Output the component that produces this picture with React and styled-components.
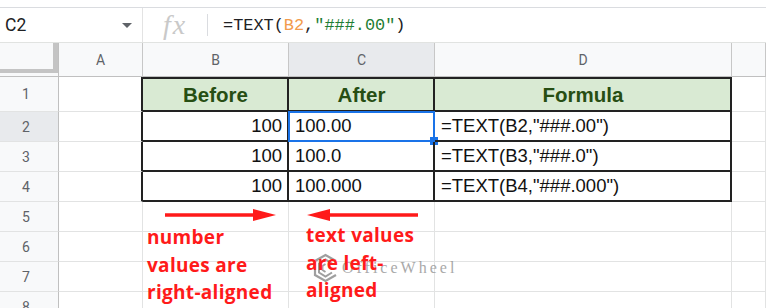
import React from 'react';
import styled, { createGlobalStyle, css } from 'styled-components';

const Global = createGlobalStyle`
  html, body { margin: 0; padding: 0; background: #fff; }
  body { width: 766px; height: 308px; overflow: hidden; font-family: "Liberation Sans", Arial, sans-serif; }
  * { box-sizing: border-box; }
`;

const Page = styled.div`
  position: relative;
  width: 766px;
  height: 308px;
  overflow: hidden;
  background: #fff;
  display: flex;
  flex-direction: column;
`;

const TopStrip = styled.div`
  flex: none;
  height: 8px;
  border-bottom: 1px solid #dadce0;
`;

const FormulaBar = styled.div`
  flex: none;
  height: 35px;
  display: flex;
  align-items: center;
  border-bottom: 1px solid #e1e3e1;
`;

const NameBox = styled.div`
  width: 143px;
  height: 100%;
  display: flex;
  align-items: center;
  justify-content: space-between;
  padding: 0 10px 0 5px;
  border-right: 1px solid #e3e3e3;
  font-family: Roboto, "Liberation Sans", sans-serif;
  font-size: 17.5px;
  color: #202124;
`;

const Caret = styled.span`
  width: 0;
  height: 0;
  border-left: 5px solid transparent;
  border-right: 5px solid transparent;
  border-top: 5px solid #5f6368;
`;

const Fx = styled.div`
  width: 44px;
  margin-left: 20px;
  font-family: "Liberation Serif", serif;
  font-style: italic;
  font-size: 28px;
  letter-spacing: 2px;
  color: #c9c9c9;
  line-height: 1;
`;

const BarDivider = styled.div`
  width: 1px;
  height: 22px;
  background: #dadce0;
`;

const FormulaText = styled.div`
  margin-left: 15px;
  font-family: "Liberation Mono", "DejaVu Sans Mono", monospace;
  font-size: 16.9px;
  color: #202124;
  white-space: pre;
`;

const Ref = styled.span`
  color: #f29b4c;
`;

const Str = styled.span`
  color: #1e7e34;
`;

const Grid = styled.div`
  flex: 1;
  display: grid;
  grid-template-columns: 59px 84px 146px 146px 297px 1fr;
  grid-template-rows: 34px 35px repeat(7, 30px);
`;

const Corner = styled.div`
  background: #f8f9fa;
  border-right: 1px solid #c0c0c0;
  border-bottom: 1px solid #c0c0c0;
`;

const FrozenHandle = styled.div`
  width: 100%;
  height: 30px;
  border-right: 5px solid #c4c4c4;
  border-bottom: 4px solid #c4c4c4;
`;

const ColHeader = styled.div`
  display: flex;
  align-items: center;
  justify-content: center;
  background: ${(p) => (p.$active ? '#e8eaed' : '#f8f9fa')};
  border-right: 1px solid #c7c7c7;
  border-bottom: 1px solid #c0c0c0;
  font-family: Roboto, "Liberation Sans", sans-serif;
  font-size: 14px;
  color: #5f6368;
`;

const RowHeader = styled.div`
  display: flex;
  align-items: center;
  justify-content: center;
  padding-right: 6px;
  background: ${(p) => (p.$active ? '#e8eaed' : '#f8f9fa')};
  border-right: 1px solid #c0c0c0;
  border-bottom: 1px solid #e2e3e3;
  font-family: Roboto, "Liberation Sans", sans-serif;
  font-size: 14px;
  color: #5f6368;
`;

const Cell = styled.div`
  position: relative;
  display: flex;
  align-items: center;
  padding: 0 5px;
  border-right: ${(p) => (p.$edge ? '2px solid #222' : '1px solid #e2e3e3')};
  border-bottom: 1px solid #e2e3e3;
`;

const TableCell = styled.div`
  position: relative;
  display: flex;
  align-items: center;
  justify-content: ${(p) => (p.$align === 'right' ? 'flex-end' : p.$align === 'center' ? 'center' : 'flex-start')};
  padding: 0 5px 0 6px;
  border-right: 2px solid #222;
  border-bottom: 2px solid #222;
  font-family: "Liberation Sans", Arial, sans-serif;
  font-size: 18.5px;
  color: #111;
  white-space: nowrap;
  ${(p) =>
    p.$head &&
    css`
      border-top: 2px solid #222;
      background: #d9ead3;
      font-weight: bold;
      font-size: 20.5px;
      color: #274e13;
    `}
`;

const Selection = styled.div`
  position: absolute;
  top: -1px;
  left: -1px;
  right: -2px;
  bottom: -2px;
  border: 2px solid #1a73e8;
  pointer-events: none;
`;

const FillHandle = styled.div`
  position: absolute;
  right: -5px;
  bottom: -5px;
  width: 8px;
  height: 8px;
  background: #1a73e8;
`;

const ArrowSvg = styled.svg`
  position: absolute;
  top: 206px;
  left: ${(p) => p.$left}px;
`;

const Note = styled.div`
  position: absolute;
  left: ${(p) => p.$left}px;
  top: ${(p) => p.$top}px;
  font-family: "Open Sans", sans-serif;
  font-weight: 700;
  font-size: 19px;
  letter-spacing: 0.3px;
  line-height: 27.5px;
  color: #ff1a1a;
  white-space: nowrap;
`;

const Watermark = styled.div`
  position: absolute;
  left: 312px;
  top: 253px;
  display: flex;
  align-items: center;
  gap: 3px;
  opacity: 0.7;
  pointer-events: none;
`;

const WatermarkText = styled.span`
  font-family: "Liberation Serif", serif;
  font-size: 16px;
  letter-spacing: 3px;
  color: #858585;
`;

const Arrow = ({ dir, left }) => (
  <ArrowSvg $left={left} width="115" height="18" viewBox="0 0 115 18">
    {dir === 'right' ? (
      <>
        <line x1="0" y1="9" x2="92" y2="9" stroke="#ff1a1a" strokeWidth="3.5" />
        <polygon points="88,3 111,9 88,15" fill="#ff1a1a" />
      </>
    ) : (
      <>
        <line x1="22" y1="9" x2="114" y2="9" stroke="#ff1a1a" strokeWidth="3.5" />
        <polygon points="26,3 3,9 26,15" fill="#ff1a1a" />
      </>
    )}
  </ArrowSvg>
);

const Logo = () => (
  <svg width="27" height="30" viewBox="0 0 27 30">
    <path d="M24 8 L13.5 2 L3 8 L3 22 L13.5 28 L24 22" fill="none" stroke="#777" strokeWidth="2.2" />
    <path d="M20 10.5 L13.5 6.5 L7 10.5 L7 19.5 L13.5 23.5 L20 19.5" fill="none" stroke="#777" strokeWidth="2" />
    <path d="M13.5 11 L10.5 13 L10.5 17 L13.5 19" fill="none" stroke="#777" strokeWidth="1.8" />
  </svg>
);

const rows = [
  { n: 2, before: '100', after: '100.00', fmt: '###.00', ref: 'B2' },
  { n: 3, before: '100', after: '100.0', fmt: '###.0', ref: 'B3' },
  { n: 4, before: '100', after: '100.000', fmt: '###.000', ref: 'B4' },
];

export default function App() {
  return (
    <Page>
      <Global />
      <TopStrip />
      <FormulaBar>
        <NameBox>
          <span>C2</span>
          <Caret />
        </NameBox>
        <Fx>fx</Fx>
        <BarDivider />
        <FormulaText>
          =TEXT(<Ref>B2</Ref>,<Str>"###.00"</Str>)
        </FormulaText>
      </FormulaBar>
      <Grid>
        <Corner>
          <FrozenHandle />
        </Corner>
        <ColHeader>A</ColHeader>
        <ColHeader>B</ColHeader>
        <ColHeader $active>C</ColHeader>
        <ColHeader>D</ColHeader>
        <ColHeader />

        <RowHeader>1</RowHeader>
        <Cell $edge />
        <TableCell $head $align="center">Before</TableCell>
        <TableCell $head $align="center">After</TableCell>
        <TableCell $head $align="center">Formula</TableCell>
        <Cell />

        {rows.map((r) => (
          <React.Fragment key={r.n}>
            <RowHeader $active={r.n === 2}>{r.n}</RowHeader>
            <Cell $edge />
            <TableCell $align="right">{r.before}</TableCell>
            <TableCell>
              {r.after}
              {r.n === 2 && (
                <Selection>
                  <FillHandle />
                </Selection>
              )}
            </TableCell>
            <TableCell>{`=TEXT(${r.ref},"${r.fmt}")`}</TableCell>
            <Cell />
          </React.Fragment>
        ))}

        {[5, 6, 7, 8].map((n) => (
          <React.Fragment key={n}>
            <RowHeader>{n}</RowHeader>
            <Cell />
            <Cell />
            <Cell />
            <Cell />
            <Cell />
          </React.Fragment>
        ))}
      </Grid>

      <Arrow dir="right" left={165} />
      <Arrow dir="left" left={304} />
      <Watermark>
        <Logo />
        <WatermarkText>OfficeWheel</WatermarkText>
      </Watermark>
      <Note $left={147} $top={224}>
        number
        <br />
        values are
        <br />
        right-aligned
      </Note>
      <Note $left={306} $top={222}>
        text values
        <br />
        are left-
        <br />
        aligned
      </Note>
    </Page>
  );
}
